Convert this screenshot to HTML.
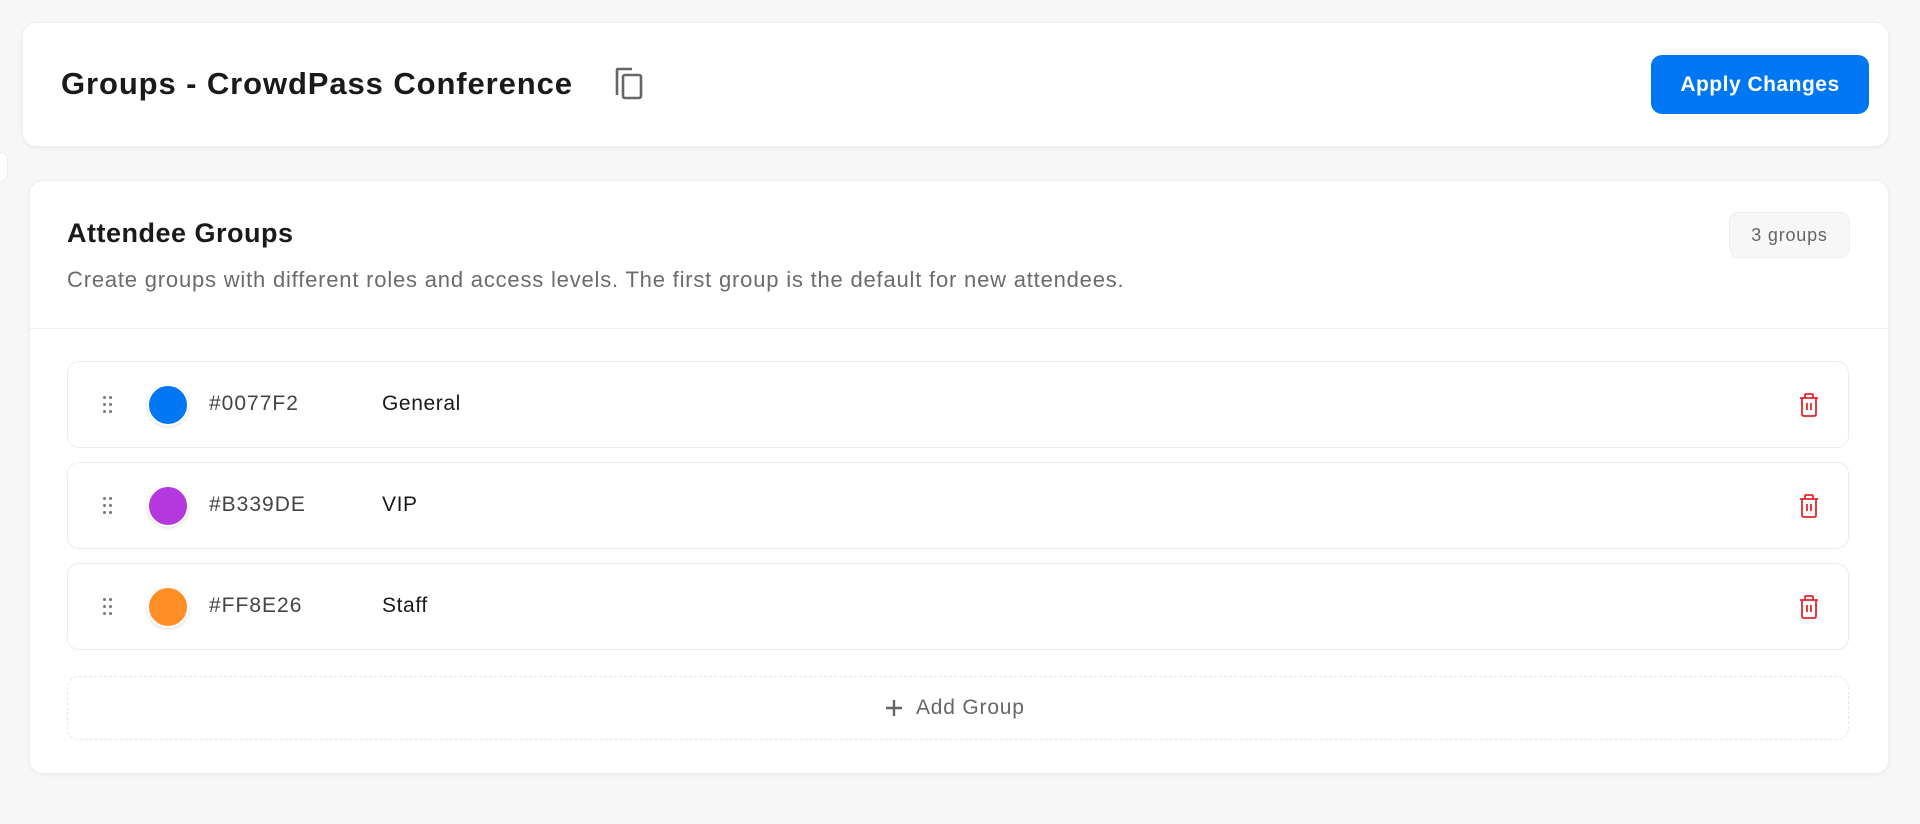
<!DOCTYPE html>
<html><head><meta charset="utf-8"><style>
*{box-sizing:border-box;margin:0;padding:0}
body{width:1920px;height:824px;background:#f7f7f7;font-family:"Liberation Sans",sans-serif;position:relative;overflow:hidden}
.card{position:absolute;background:#fff;border-radius:14px;box-shadow:0 1px 3px rgba(0,0,0,.06);border:1px solid #efefef}
.row{position:absolute;left:67px;width:1782px;height:87px;border:1px solid #ececec;border-radius:12px;background:#fff}
.dots{position:absolute;left:35px;top:34px;width:9px;height:17px}
.dots i{position:absolute;width:3px;height:3px;border-radius:50%;background:#777}
.circ{position:absolute;left:79px;top:22px;width:42px;height:42px;border-radius:50%;border:2px solid #fff;box-shadow:0 1px 3px rgba(0,0,0,.15)}
.hex{position:absolute;left:141px;top:30px;font-size:21px;letter-spacing:1px;color:#444}
.name{position:absolute;left:314px;top:30px;font-size:21px;letter-spacing:0.6px;color:#1a1a1a}
.trash{position:absolute;left:1730px;top:30px}
</style></head><body>
<div class="card" style="left:22px;top:22px;width:1867px;height:125px"></div>
<div style="position:absolute;left:61px;top:66px;font-size:31px;font-weight:bold;color:#1a1a1a;letter-spacing:0.9px">Groups - CrowdPass Conference</div>
<svg style="position:absolute;left:615px;top:67px" width="30" height="34" viewBox="0 0 30 34"><path d="M2 28V3Q2 2 3 2H17" fill="none" stroke="#666" stroke-width="2.6"/><rect x="8" y="8" width="18" height="23" rx="2" fill="none" stroke="#666" stroke-width="2.6"/></svg>
<div style="position:absolute;left:1651px;top:55px;width:218px;height:59px;background:#0077F2;border-radius:11px;color:#fff;font-size:21px;letter-spacing:0.5px;font-weight:bold;text-align:center;line-height:59px">Apply Changes</div>
<div style="position:absolute;left:0;top:152px;width:8px;height:30px;background:#fff;border-radius:0 15px 15px 0;border:1px solid #eee;border-left:none"></div>

<div class="card" style="left:29px;top:180px;width:1860px;height:594px"></div>
<div style="position:absolute;left:67px;top:218px;font-size:27px;letter-spacing:0.5px;font-weight:bold;color:#1a1a1a">Attendee Groups</div>
<div style="position:absolute;left:67px;top:267px;font-size:22px;letter-spacing:0.8px;color:#6b6b6b">Create groups with different roles and access levels. The first group is the default for new attendees.</div>
<div style="position:absolute;left:1729px;top:212px;width:121px;height:46px;background:#f7f7f7;border:1px solid #eee;border-radius:10px;font-size:18px;letter-spacing:0.8px;color:#666;text-align:center;line-height:44px">3 groups</div>
<div style="position:absolute;left:30px;top:328px;width:1858px;height:1px;background:#f0f0f0"></div>

<div class="row" style="top:361px"><div class="dots"><i style="left:0;top:0"></i><i style="left:6px;top:0"></i><i style="left:0;top:7px"></i><i style="left:6px;top:7px"></i><i style="left:0;top:14px"></i><i style="left:6px;top:14px"></i></div><div class="circ" style="background:#0077F2"></div><div class="hex">#0077F2</div><div class="name">General</div><svg class="trash" width="22" height="26" viewBox="0 0 22 26"><path d="M2 6H20M7 6V3Q7 2 8 2H14Q15 2 15 3V6M4 6V22Q4 24 6 24H16Q18 24 18 22V6M9 11V18M13 11V18" fill="none" stroke="#e5262b" stroke-width="1.8"/></svg></div>
<div class="row" style="top:462px"><div class="dots"><i style="left:0;top:0"></i><i style="left:6px;top:0"></i><i style="left:0;top:7px"></i><i style="left:6px;top:7px"></i><i style="left:0;top:14px"></i><i style="left:6px;top:14px"></i></div><div class="circ" style="background:#B339DE"></div><div class="hex">#B339DE</div><div class="name">VIP</div><svg class="trash" width="22" height="26" viewBox="0 0 22 26"><path d="M2 6H20M7 6V3Q7 2 8 2H14Q15 2 15 3V6M4 6V22Q4 24 6 24H16Q18 24 18 22V6M9 11V18M13 11V18" fill="none" stroke="#e5262b" stroke-width="1.8"/></svg></div>
<div class="row" style="top:563px"><div class="dots"><i style="left:0;top:0"></i><i style="left:6px;top:0"></i><i style="left:0;top:7px"></i><i style="left:6px;top:7px"></i><i style="left:0;top:14px"></i><i style="left:6px;top:14px"></i></div><div class="circ" style="background:#FF8E26"></div><div class="hex">#FF8E26</div><div class="name">Staff</div><svg class="trash" width="22" height="26" viewBox="0 0 22 26"><path d="M2 6H20M7 6V3Q7 2 8 2H14Q15 2 15 3V6M4 6V22Q4 24 6 24H16Q18 24 18 22V6M9 11V18M13 11V18" fill="none" stroke="#e5262b" stroke-width="1.8"/></svg></div>

<div style="position:absolute;left:67px;top:676px;width:1782px;height:64px;border:1px dashed #e6e6e6;border-radius:12px"></div>
<div style="position:absolute;left:884px;top:696px;font-size:21px;letter-spacing:0.8px;color:#666;display:flex;align-items:center"><svg width="20" height="20" viewBox="0 0 20 20" style="margin-right:12px"><path d="M10 2V18M2 10H18" stroke="#666" stroke-width="2.4"/></svg>Add Group</div>
</body></html>
